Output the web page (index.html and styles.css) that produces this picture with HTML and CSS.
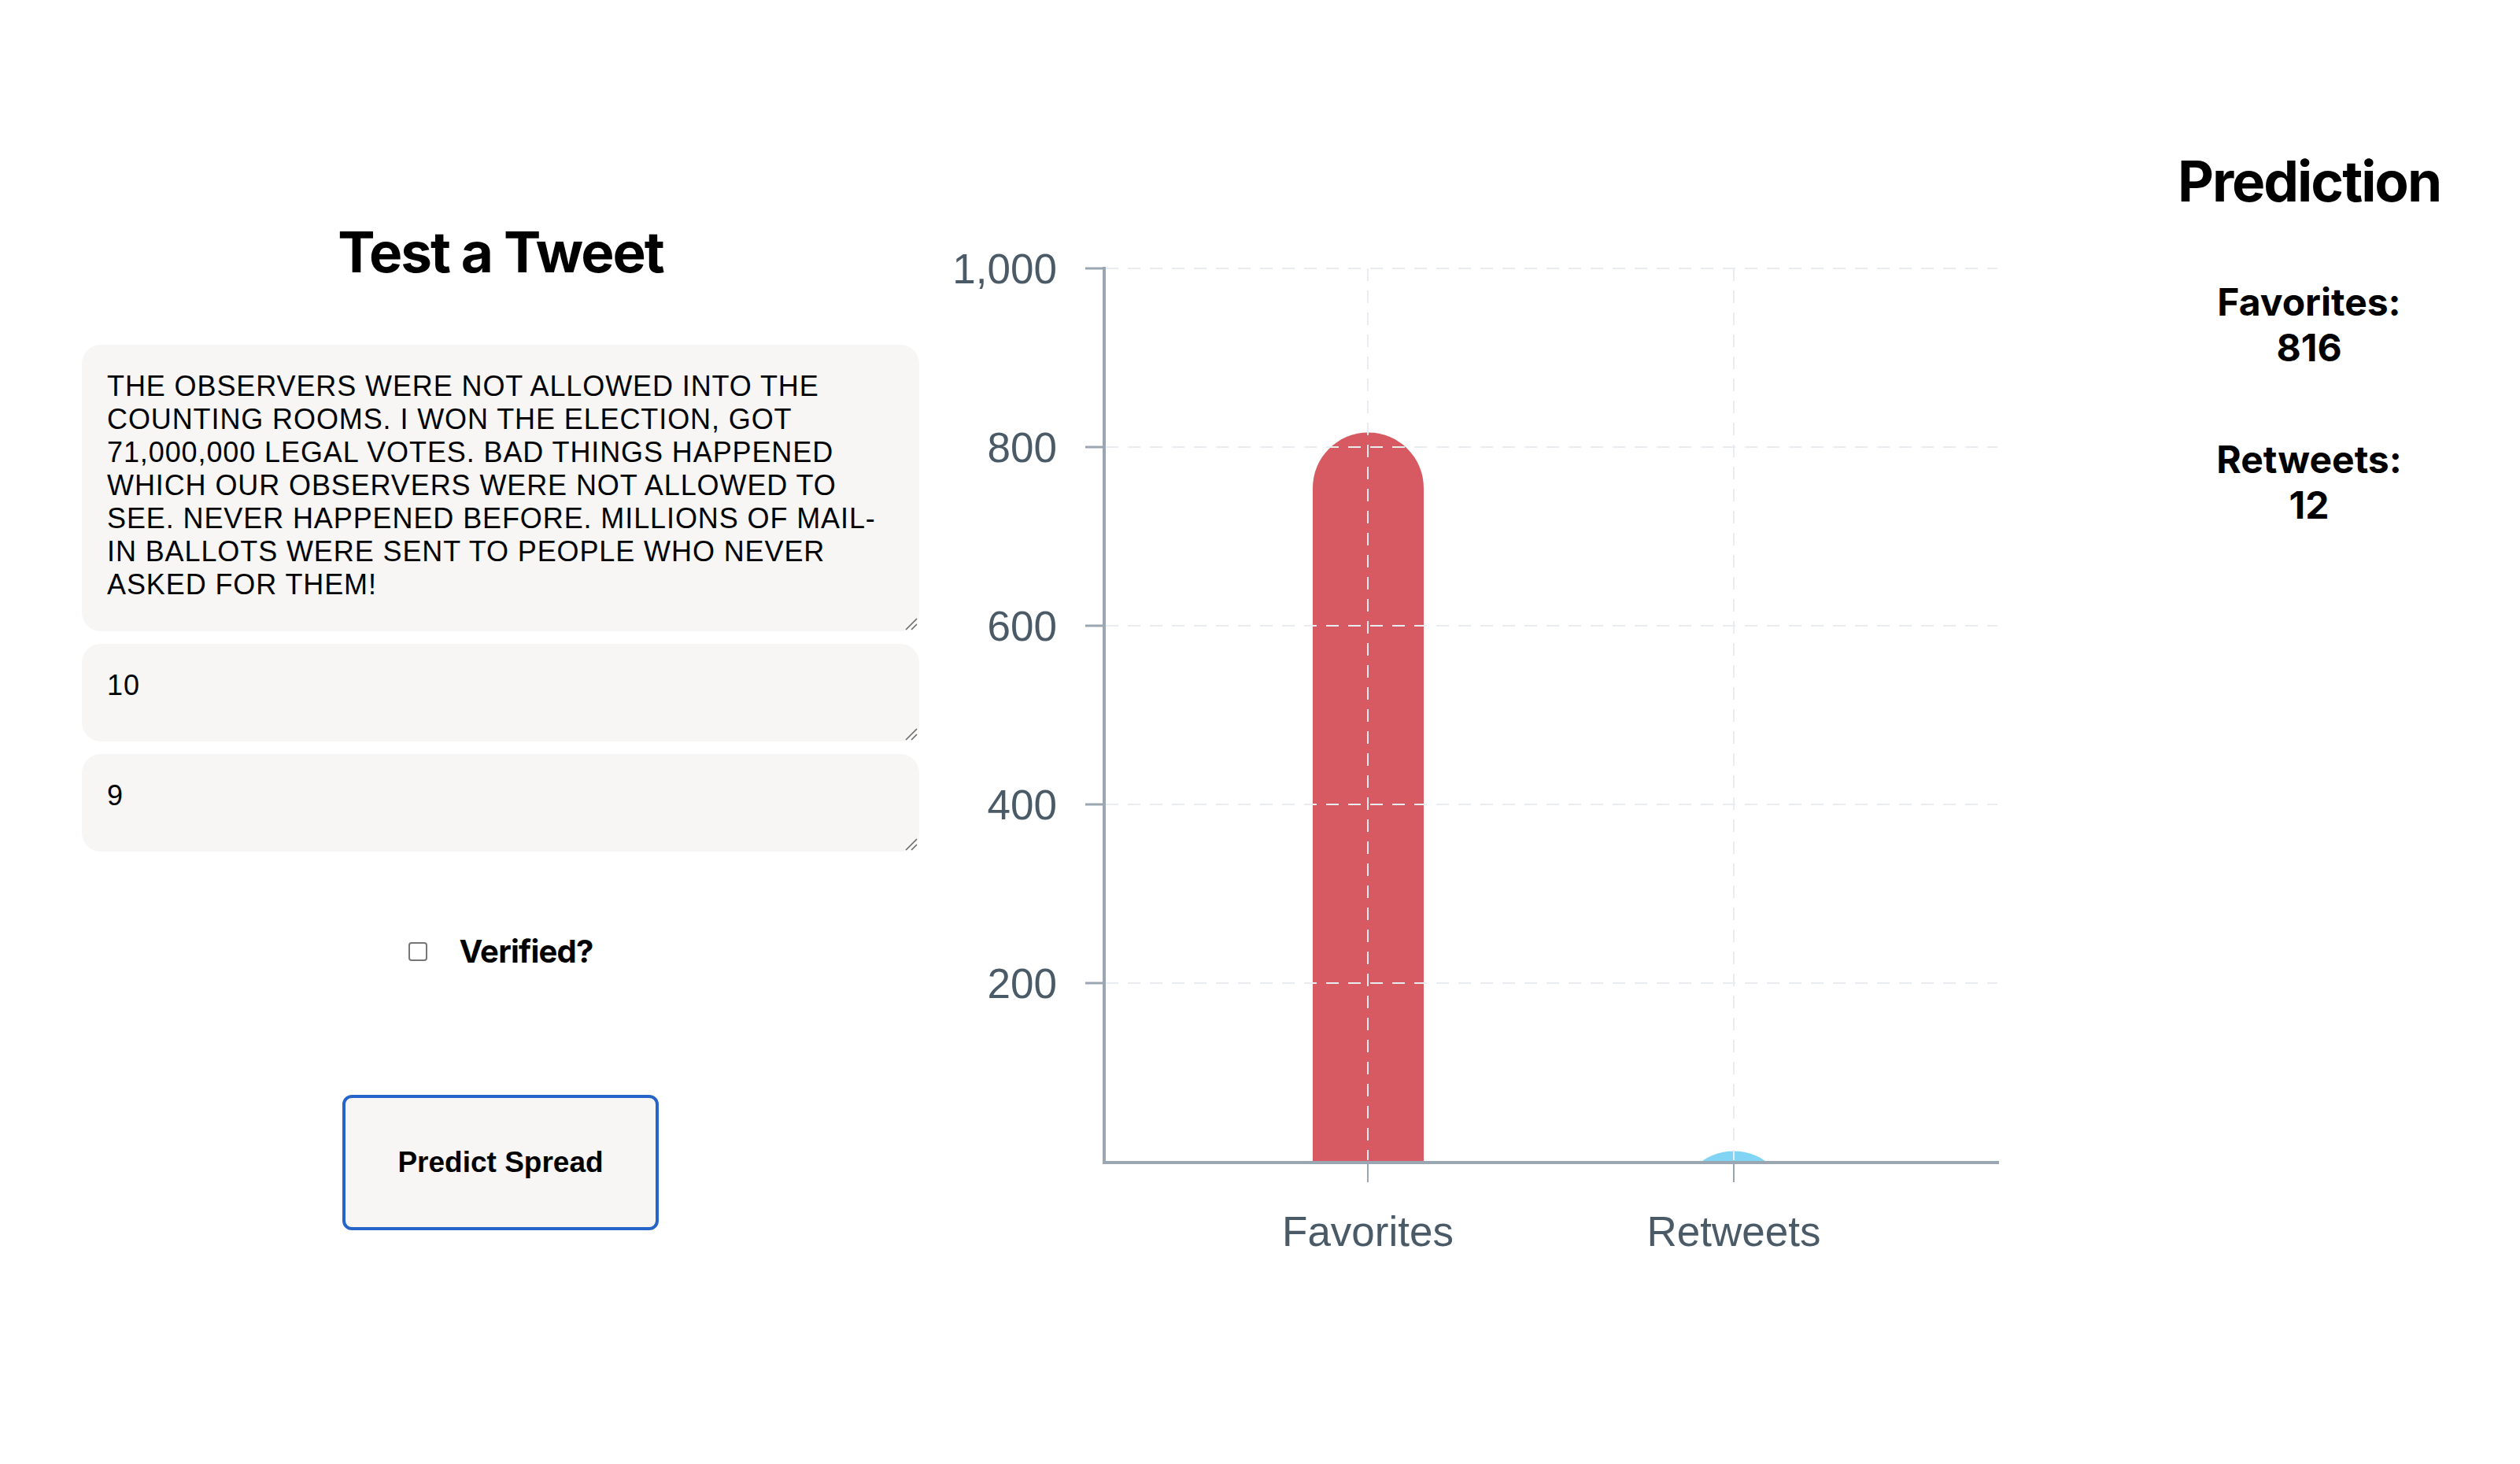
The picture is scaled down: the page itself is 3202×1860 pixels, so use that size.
FILE: index.html
```html
<!DOCTYPE html>
<html lang="en">
<head>
<meta charset="utf-8">
<title>Test a Tweet</title>
<link rel="stylesheet" href="styles.css">
</head>
<body>
<main class="page">
  <section class="tester">
    <h1 class="title">Test a Tweet</h1>
    <form class="form">
      <div class="field-wrap">
        <textarea class="field field-tweet">THE OBSERVERS WERE NOT ALLOWED INTO THE COUNTING ROOMS. I WON THE ELECTION, GOT 71,000,000 LEGAL VOTES. BAD THINGS HAPPENED WHICH OUR OBSERVERS WERE NOT ALLOWED TO SEE. NEVER HAPPENED BEFORE. MILLIONS OF MAIL-IN BALLOTS WERE SENT TO PEOPLE WHO NEVER ASKED FOR THEM!</textarea>
        <svg class="grip" width="16" height="16" viewBox="0 0 16 16"><path d="M1 15 L15 1 M8 15 L15 8"/></svg>
      </div>
      <div class="field-wrap">
        <textarea class="field field-num">10</textarea>
        <svg class="grip" width="16" height="16" viewBox="0 0 16 16"><path d="M1 15 L15 1 M8 15 L15 8"/></svg>
      </div>
      <div class="field-wrap field-last">
        <textarea class="field field-num">9</textarea>
        <svg class="grip" width="16" height="16" viewBox="0 0 16 16"><path d="M1 15 L15 1 M8 15 L15 8"/></svg>
      </div>
      <label class="verify"><input type="checkbox" class="check"><span>Verified?</span></label>
      <button type="button" class="predict">Predict Spread</button>
    </form>
  </section>

  <section class="chart">
    <svg class="chart-svg" width="1486" height="1700" viewBox="1180 0 1486 1700" xmlns="http://www.w3.org/2000/svg">
      <defs>
        <clipPath id="plotclip"><rect x="1400" y="300" width="1160" height="1176"/></clipPath>
      </defs>
      <g clip-path="url(#plotclip)">
        <path class="bar-fav" d="M1668 1476 V620 A70.5 70.5 0 0 1 1809 620 V1476 Z"/>
        <path class="bar-rt" d="M2132.5 1600 V1533 A70.5 70.5 0 0 1 2273.5 1533 V1600 Z"/>
      </g>
      <g class="grid">
        <line x1="1405" y1="341" x2="2538" y2="341"/>
        <line x1="1405" y1="568" x2="2538" y2="568"/>
        <line x1="1405" y1="795" x2="2538" y2="795"/>
        <line x1="1405" y1="1022" x2="2538" y2="1022"/>
        <line x1="1405" y1="1249" x2="2538" y2="1249"/>
        <line x1="1738" y1="341" x2="1738" y2="1474"/>
        <line x1="2203" y1="341" x2="2203" y2="1474"/>
      </g>
      <g class="ticks">
        <line x1="1379" y1="341" x2="1403" y2="341"/>
        <line x1="1379" y1="568" x2="1403" y2="568"/>
        <line x1="1379" y1="795" x2="1403" y2="795"/>
        <line x1="1379" y1="1022" x2="1403" y2="1022"/>
        <line x1="1379" y1="1249" x2="1403" y2="1249"/>
        <line class="xtick" x1="1738" y1="1478" x2="1738" y2="1502"/>
        <line class="xtick" x1="2203" y1="1478" x2="2203" y2="1502"/>
      </g>
      <g class="axis">
        <line x1="1403" y1="339" x2="1403" y2="1479"/>
        <line x1="1401" y1="1477" x2="2540" y2="1477"/>
      </g>
      <g class="ylabels">
        <text x="1343" y="360">1,000</text>
        <text x="1343" y="587">800</text>
        <text x="1343" y="814">600</text>
        <text x="1343" y="1041">400</text>
        <text x="1343" y="1268">200</text>
      </g>
      <g class="xlabels">
        <text x="1738" y="1583">Favorites</text>
        <text x="2203" y="1583">Retweets</text>
      </g>
    </svg>
  </section>

  <section class="prediction">
    <h2 class="pred-title">Prediction</h2>
    <p class="stat">Favorites:<br>816</p>
    <p class="stat stat-second">Retweets:<br>12</p>
  </section>
</main>
</body>
</html>
```

FILE: styles.css
```css
html, body {
  margin: 0;
  padding: 0;
  background: #ffffff;
}

body {
  font-family: Inter, "Liberation Sans", Arial, sans-serif;
  color: #000000;
}

.page {
  display: flex;
  align-items: flex-start;
}

/* Left column */
.tester {
  width: 1064px;
  margin-left: 104px;
  padding-top: 277px;
  display: flex;
  flex-direction: column;
}

.title {
  margin: 0 0 74px;
  font-size: 71px;
  font-weight: 700;
  line-height: 87px;
  letter-spacing: -2px;
  text-align: center;
}

.form {
  display: flex;
  flex-direction: column;
  align-items: center;
}

.field-wrap {
  position: relative;
  width: 100%;
  margin: 0 0 16px;
}

.field-last {
  margin-bottom: 0;
}

.field {
  display: block;
  box-sizing: border-box;
  width: 100%;
  margin: 0;
  padding: 32px;
  border: none;
  border-radius: 24px;
  background: #f7f6f5;
  color: #000000;
  font-family: "Liberation Sans", Arial, sans-serif;
  font-size: 36px;
  line-height: 42px;
  letter-spacing: 0.9px;
  resize: none;
  outline: none;
  overflow: hidden;
}

.field-tweet {
  height: 364px;
}

.field-num {
  height: 124px;
}

.grip {
  position: absolute;
  right: 2px;
  bottom: 1px;
}

.grip path {
  fill: none;
  stroke: #6b6b6b;
  stroke-width: 1.6;
}

.verify {
  display: flex;
  align-items: center;
  gap: 41px;
  margin-top: 103px;
  font-size: 40px;
  font-weight: 700;
  line-height: 48px;
  letter-spacing: -0.8px;
}

.check {
  appearance: none;
  -webkit-appearance: none;
  box-sizing: border-box;
  width: 24px;
  height: 24px;
  margin: 0;
  border: 2px solid #767676;
  border-radius: 4px;
  background: #ffffff;
}

.predict {
  box-sizing: border-box;
  width: 402px;
  height: 172px;
  margin-top: 158px;
  border: 4px solid #2764c9;
  border-radius: 12px;
  background: #f7f6f5;
  color: #000000;
  font-family: "Liberation Sans", Arial, sans-serif;
  font-size: 37px;
  font-weight: 700;
}

/* Chart */
.chart {
  width: 1486px;
  margin-left: 12px;
}

.chart-svg {
  display: block;
}

.bar-fav {
  fill: #d75a63;
}

.bar-rt {
  fill: #82d4f5;
}

.grid line {
  stroke: #e9ecf0;
  stroke-width: 2;
  stroke-dasharray: 16 12;
}

.ticks line {
  stroke: #9aa6b2;
  stroke-width: 3;
}

.ticks .xtick {
  stroke-width: 2;
}

.axis line {
  stroke: #9aa6b2;
  stroke-width: 4;
}

.ylabels text {
  font-family: "Liberation Sans", Arial, sans-serif;
  font-size: 53px;
  fill: #4b5a67;
  text-anchor: end;
}

.xlabels text {
  font-family: "Liberation Sans", Arial, sans-serif;
  font-size: 53px;
  fill: #4b5a67;
  text-anchor: middle;
}

/* Right column */
.prediction {
  width: 536px;
  padding-top: 187px;
  text-align: center;
}

.pred-title {
  margin: 0 0 81px;
  font-size: 71px;
  font-weight: 700;
  line-height: 87px;
  letter-spacing: -2px;
}

.stat {
  margin: 0;
  font-size: 48px;
  font-weight: 700;
  line-height: 58px;
}

.stat-second {
  margin-top: 84px;
}
```
